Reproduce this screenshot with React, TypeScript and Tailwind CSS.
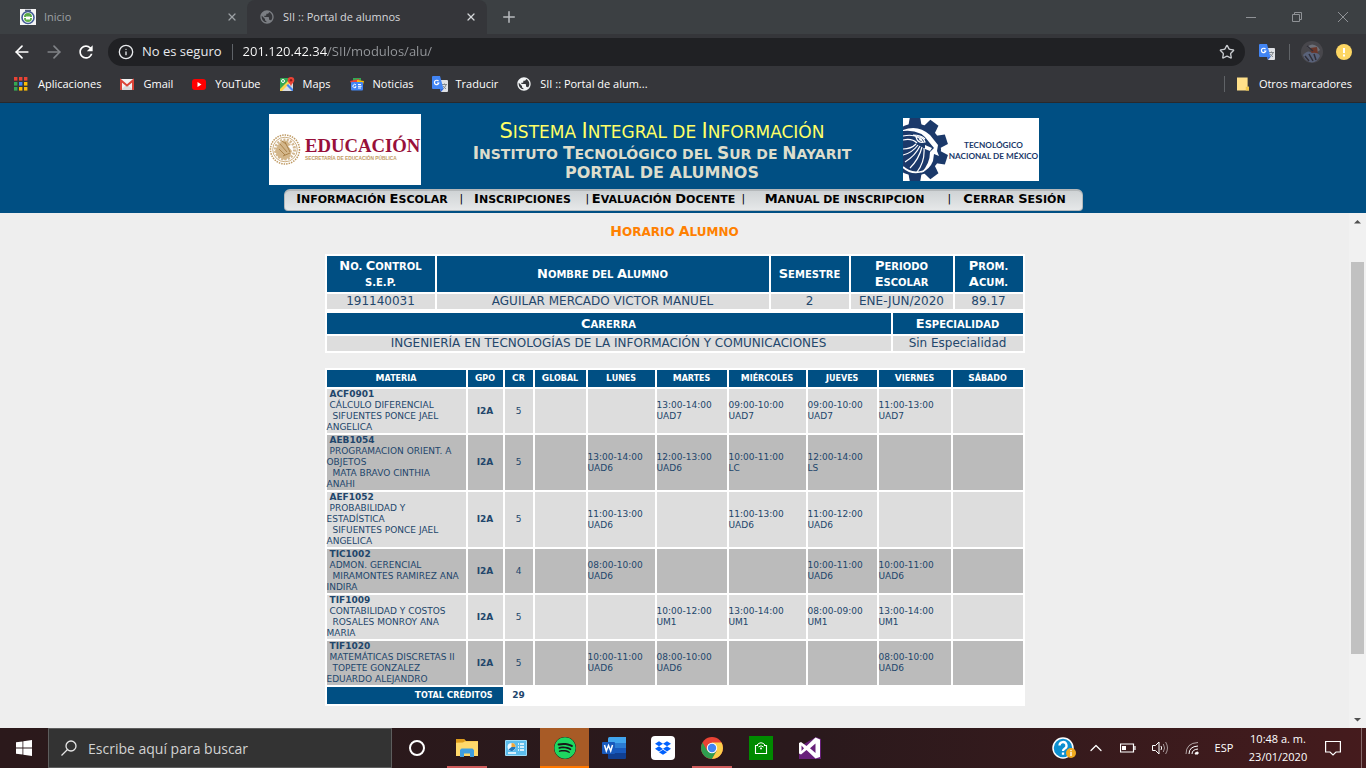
import type { ReactNode } from "react";
import { ArrowLeft, ArrowRight, ChevronUp, Info, Plus, Star, X } from "lucide-react";
import { MdPublic, MdRefresh } from "react-icons/md";
import { FaDropbox, FaSpotify } from "react-icons/fa";

/* ---------- Icons ---------- */

function TranslateIcon() {
  return (
    <svg viewBox="0 0 16 16" className="size-4 shrink-0" aria-hidden="true">
      <path d="M6 4h9a1 1 0 0 1 1 1v10a1 1 0 0 1-1 1H9z" fill="#dfe1e5" />
      <path d="M10 8.500h5M12.500 7.500v1M14 8.800c-.5 1.700-1.700 3.200-3 4M11.300 10c.6 1.200 1.500 2.200 2.700 2.800" stroke="#80868b" fill="none" />
      <path d="M1 0h7l3.500 13H1a1 1 0 0 1-1-1V1a1 1 0 0 1 1-1z" fill="#4285f4" />
      <path d="M9 16l2.500-3H8z" fill="#3367d6" />
      <path d="M6.500 5.200A2.200 2.200 0 1 0 6.800 7H5" stroke="#fff" strokeWidth="1.200" fill="none" />
    </svg>
  );
}

function CrestIcon() {
  return (
    <svg viewBox="0 0 16 16" className="size-4 shrink-0" aria-hidden="true">
      <rect width="16" height="16" fill="#f4f4f4" />
      <circle cx="8" cy="8.500" r="6" fill="#fff" stroke="#3f5a94" strokeWidth="1.600" />
      <path d="M4 8a4 4 0 0 1 8 0z" fill="#58a846" />
      <path d="M4 9h8a4 4 0 0 1-8 0z" fill="#5fae4c" />
      <path d="M6 7.500h4v3H6z" fill="#fff" />
      <path d="M5 1.500h6" stroke="#4d5b7c" strokeWidth="1.500" />
    </svg>
  );
}

function AppsIcon() {
  const colors = ["#ea4335", "#ea4335", "#ea4335", "#34a853", "#4285f4", "#fbbc05", "#34a853", "#fbbc05", "#fbbc05"];
  return (
    <svg viewBox="0 0 14 14" className="size-3.5 shrink-0" aria-hidden="true">
      {colors.map((c, i) => (
        <rect key={i} x={(i % 3) * 5} y={Math.floor(i / 3) * 5} width="3.400" height="3.600" fill={c} />
      ))}
    </svg>
  );
}

function GmailIcon() {
  return (
    <svg viewBox="0 0 16 16" className="size-4 shrink-0" aria-hidden="true">
      <rect x="1" y="3" width="14" height="11" rx="1" fill="#f2f2f2" />
      <path d="M2 14l6-6 6 6z" fill="#d9d9d9" />
      <path d="M2 14V4.500l6 5 6-5V14" fill="none" stroke="#db4437" strokeWidth="2" />
    </svg>
  );
}

function YouTubeIcon() {
  return (
    <svg viewBox="0 0 16 16" className="size-4 shrink-0" aria-hidden="true">
      <rect x="1" y="3" width="14" height="11" rx="3" fill="#f00" />
      <path d="M6.500 6v5l4-2.500z" fill="#fff" />
    </svg>
  );
}

function MapsIcon() {
  return (
    <svg viewBox="0 0 16 16" className="size-4 shrink-0" aria-hidden="true">
      <rect x="1" y="2" width="13" height="13" rx="1" fill="#34a853" />
      <path d="M2 15L13 4h1v10l-1 1z" fill="#dadce0" />
      <path d="M1 13L12 2h2v2L3 15H1z" fill="#fbd34d" />
      <path d="M7.500 9.500l5.500 5.500h1v-2L9 8z" fill="#4285f4" />
      <circle cx="4" cy="5" r="1.500" fill="none" stroke="#fff" />
      <path d="M12 1a3.300 3.300 0 0 1 3.300 3.300C15.300 6.800 12.600 7.600 12 10.500 11.400 7.600 8.700 6.800 8.700 4.300A3.300 3.300 0 0 1 12 1z" fill="#ea4335" />
      <circle cx="12" cy="4.300" r="1.200" fill="#8c1d18" />
    </svg>
  );
}

function NewsIcon() {
  return (
    <svg viewBox="0 0 16 16" className="size-4 shrink-0" aria-hidden="true">
      <path d="M4 2h8v5H4z" fill="#34a853" />
      <path d="M1 5l9-2 1 4H2z" fill="#ea4335" />
      <path d="M8 4l7 1-1 4H8z" fill="#fbbc05" />
      <rect x="2" y="6" width="12" height="8.500" rx="1" fill="#4285f4" />
      <path d="M7 9a1.700 1.700 0 1 0 .2 1.800H5.800M9 8.500h3M9 10.300h3.500M9 12h3" stroke="#fff" fill="none" />
    </svg>
  );
}

function FolderNoteIcon() {
  return (
    <svg viewBox="0 0 13 14" className="h-3.5 w-3 shrink-0" aria-hidden="true">
      <path d="M0 0h11.500v10H13v4H0z" fill="#ffe08a" />
      <path d="M9.500 10H13v4H9.500z" fill="#f2c94c" />
    </svg>
  );
}

/* ---------- Browser window ---------- */

function Tab({ icon, title, active }: { icon: ReactNode; title: string; active?: boolean }) {
  return (
    <div
      className={
        active
          ? "flex h-full w-[240px] items-center rounded-t-lg bg-[#35363a] pr-2 pl-3 text-[#d5d7da]"
          : "flex h-full w-[247px] items-center pr-[7px] pl-5 text-[#9da1a5]"
      }
    >
      {icon}
      <span className="ml-2 flex-1 text-[11px]">{title}</span>
      <button type="button" aria-label={`Cerrar ${title}`} className="flex size-4 items-center justify-center">
        <X className="size-3" strokeWidth={2.500} />
      </button>
    </div>
  );
}

function TabStrip() {
  return (
    <div className="flex h-[34px] items-center bg-[#3c4043]">
      <Tab icon={<CrestIcon />} title="Inicio" />
      <Tab active icon={<MdPublic className="size-4 text-[#7b7e83]" />} title="SII :: Portal de alumnos" />
      <button type="button" aria-label="Nueva pestaña" className="ml-[13px] text-[#b8bbbf]">
        <Plus className="size-[18px]" />
      </button>
      <div className="ml-auto flex h-7 text-[#8f9296]">
        <button type="button" aria-label="Minimizar" className="flex w-[46px] items-center justify-center">
          <svg viewBox="0 0 10 10" className="size-2.5"><path d="M0 5.500h10" stroke="currentColor" /></svg>
        </button>
        <button type="button" aria-label="Restaurar" className="flex w-[46px] items-center justify-center">
          <svg viewBox="0 0 10 10" className="size-2.5" fill="none" stroke="currentColor">
            <path d="M.5 2.500h7v7h-7zM2.500 2.500v-2h7v7h-2" />
          </svg>
        </button>
        <button type="button" aria-label="Cerrar" className="flex w-[46px] items-center justify-center">
          <svg viewBox="0 0 10 10" className="size-2.5"><path d="M0 0l10 10M10 0L0 10" stroke="currentColor" /></svg>
        </button>
      </div>
    </div>
  );
}

function Toolbar() {
  return (
    <div className="flex h-9 items-center pl-3 pr-3.5">
      <div className="flex w-24 items-center gap-3">
        <button type="button" aria-label="Atrás" className="text-white"><ArrowLeft className="size-5" /></button>
        <button type="button" aria-label="Adelante" className="text-[#808387]"><ArrowRight className="size-5" /></button>
        <button type="button" aria-label="Recargar" className="text-white"><MdRefresh className="size-5" /></button>
      </div>
      <div className="flex h-7 flex-1 items-center rounded-full bg-[#202124] pr-2.5 pl-2.5 text-[13px]">
        <Info className="size-4 text-[#e8eaed]" />
        <span className="ml-2 text-[#e8eaed]">No es seguro</span>
        <span className="mx-2.5 h-4 w-px bg-[#5f6368]" />
        <input
          type="text"
          aria-label="Dirección"
          defaultValue="201.120.42.34/SII/modulos/alu/"
          className="min-w-0 flex-1 bg-[linear-gradient(90deg,#ffffff_85px,#96999d_85px)] bg-clip-text text-transparent outline-none"
        />
        <button type="button" aria-label="Añadir a marcadores" className="text-[#c9ccd0]"><Star className="size-4" /></button>
      </div>
      <button type="button" aria-label="Traducir" className="ml-3.5"><TranslateIcon /></button>
      <span className="ml-3.5 h-4 w-px bg-[#606367]" />
      <button type="button" aria-label="Perfil" className="ml-[11px]">
        <svg viewBox="0 0 22 22" className="size-[22px]">
          <circle cx="11" cy="11" r="11" fill="#48474c" />
          <path d="M6 6q5-5 11 0l2 3-4 3-5-3z" fill="#6d7079" />
          <path d="M9 7l7-1 1 7-6 2z" fill="#6b3629" />
          <path d="M2 14q5-6 9-2 6-1 8 3-3 6-8 6.500Q4 21 2 14z" fill="#59627a" />
          <path d="M4 15l4 5M8 13l4 7M13 13l2 6M6 5l6 5" stroke="#302f38" strokeWidth="1.500" />
        </svg>
      </button>
      <button type="button" aria-label="Actualización disponible" className="ml-[13px]">
        <svg viewBox="0 0 16 16" className="size-4">
          <circle cx="8" cy="8" r="8" fill="#fdd663" />
          <path d="M8 4v5M8 10.500v2" stroke="#fff" strokeWidth="2" />
        </svg>
      </button>
    </div>
  );
}

const bookmarks: { label: string; icon: ReactNode }[] = [
  { label: "Gmail", icon: <GmailIcon /> },
  { label: "YouTube", icon: <YouTubeIcon /> },
  { label: "Maps", icon: <MapsIcon /> },
  { label: "Noticias", icon: <NewsIcon /> },
  { label: "Traducir", icon: <TranslateIcon /> },
  { label: "SII :: Portal de alum...", icon: <MdPublic className="size-4 text-[#f1f3f4]" /> },
];

function BookmarkBar() {
  return (
    <nav aria-label="Marcadores" className="flex h-[33px] items-center gap-[18px] border-b border-[#29292c] pr-3.5 pb-1 pl-3.5 text-[11px] text-white">
      <a href="#aplicaciones" className="flex items-center gap-2.5"><AppsIcon />Aplicaciones</a>
      {bookmarks.map((b) => (
        <a key={b.label} href="#marcador" className="flex items-center gap-2">{b.icon}{b.label}</a>
      ))}
      <a href="#otros" className="ml-auto flex items-center gap-2.5 border-l border-[#606367] pl-3">
        <FolderNoteIcon />Otros marcadores
      </a>
    </nav>
  );
}

/* ---------- Portal header ---------- */

/** Capitals keep the surrounding size; the remaining letters are set as smaller capitals. */
function SmallCaps({ children, small }: { children: string; small: string }) {
  const runs = children.match(/\p{Lu}+|\P{Lu}+/gu) ?? [];
  return (
    <>
      {runs.map((run, i) =>
        /^\p{Lu}/u.test(run) ? run : <span key={i} className={`uppercase ${small}`}>{run}</span>
      )}
    </>
  );
}

function EducacionLogo() {
  return (
    <svg viewBox="0 0 152 71" className="h-[71px] w-[152px]" role="img" aria-label="Educación">
      <rect width="152" height="71" fill="#fff" />
      <g fill="none" stroke="#bf9a63">
        <circle cx="16" cy="35.500" r="14.500" strokeWidth="1.500" strokeDasharray="1.500 1" />
        <circle cx="16" cy="35.500" r="12.300" strokeWidth=".8" />
        <circle cx="16" cy="35.500" r="9.500" strokeWidth="3" strokeDasharray="2 1.300" opacity=".7" />
      </g>
      <path d="M9 31q4-6 9-4l4 4-3 1 4 5-2 6-5 3-7-3-3-6z" fill="#d3b68a" />
      <path d="M11 30l7 8M10 35l6 6M16 28l5 10M14 42l7-3M13 27l4 3" stroke="#a57c42" strokeWidth=".9" />
      <text x="36" y="38" fontFamily="'Liberation Serif', serif" fontWeight="700" fontSize="18.700" fill="#98103a">EDUCACIÓN</text>
      <text x="36" y="46" fontFamily="'Liberation Sans', sans-serif" fontWeight="700" fontSize="4.800" fill="#bf9a63">SECRETARÍA DE EDUCACIÓN PÚBLICA</text>
    </svg>
  );
}

function TecnmLogo() {
  const teeth = [0, 36, 72, 108, 144, 180];
  return (
    <svg viewBox="0 0 136 63" className="h-[63px] w-[136px]" role="img" aria-label="Tecnológico Nacional de México">
      <rect width="136" height="63" fill="#fff" />
      <g fill="#1b396a">
        <circle cx="12" cy="31.500" r="26" />
        {teeth.map((a) => (
          <path key={a} d="M5.500 7l1.500-8.500h10l1.500 8.500z" transform={`rotate(${a} 12 31.500)`} />
        ))}
      </g>
      <path d="M0 12Q15 6 27 17l8 10-1 6 2 5-5-2-1 7q-3 8-12 12 9-9 9-21l4-4-5-6Q18 11 0 13z" fill="#fff" />
      <g fill="none" stroke="#fff" strokeWidth="1.200">
        <path d="M0 18q14-3 20 6M0 22q9-2 14 3M10 17q8 0 12 4" />
        <path d="M13 19q7-1 9 5-7 2-9-5z" />
        <path d="M0 31q8 0 13-5M0 37q9-2 15-10M2 44Q12 38 17 28M7 50q9-9 12-21M14 54q8-10 7-24" />
        <path d="M0 49q8 8 21 4" strokeWidth="1.800" />
      </g>
      <path d="M22 27l7 3-2 3-5-2z" fill="#fff" />
      <circle cx="17.500" cy="21.500" r="1.300" fill="#fff" />
      <g fontFamily="Lato, sans-serif" fontWeight="700" fontSize="8.200" fill="#1b396a" textAnchor="middle">
        <text x="90.500" y="30">TECNOLÓGICO</text>
        <text x="90.500" y="40.500">NACIONAL DE MÉXICO</text>
      </g>
    </svg>
  );
}

const menu = [
  { label: "Información Escolar", width: "w-[175px]" },
  { label: "Inscripciones", width: "w-[126px]" },
  { label: "Evaluación Docente", width: "w-[156px]" },
  { label: "Manual de inscripcion", width: "w-[206px]" },
  { label: "Cerrar Sesión", width: "w-[134px]" },
];

function PortalHeader() {
  return (
    <header className="flex h-[110px] shrink-0 flex-col items-center bg-[#004f83] pt-[11px]">
      <div className="grid w-full max-w-[828px] grid-cols-[152px_1fr_136px] pr-[58px]">
        <EducacionLogo />
        <div className="pt-1.5 text-center font-bold whitespace-nowrap text-[#ddddcc]">
          <h1 className="text-[21px] leading-[22px] font-normal text-[#ffff66]"><SmallCaps small="text-[17px]">Sistema Integral de Información</SmallCaps></h1>
          <p className="text-[17px] leading-5"><SmallCaps small="text-[14px]">Instituto Tecnológico del Sur de Nayarit</SmallCaps></p>
          <p className="text-[16px] leading-[18px]">PORTAL DE ALUMNOS</p>
        </div>
        <div className="pt-1"><TecnmLogo /></div>
      </div>
      <nav aria-label="Portal" className="mt-1 flex h-[22px] rounded-t-md rounded-b-sm border border-t-2 border-[#b4b8ba] bg-linear-to-b from-[#cfd3d5] to-[#e6e8e9] text-[13px] leading-4 font-bold text-black">
        {menu.map((m, i) => (
          <span key={m.label} className={`flex ${m.width}`}>
            <a href="#portal" className="flex-1 text-center whitespace-nowrap"><SmallCaps small="text-[11px]">{m.label}</SmallCaps></a>
            {i < menu.length - 1 && <span className="w-0 text-[11px] font-normal">|</span>}
          </span>
        ))}
      </nav>
    </header>
  );
}

/* ---------- Student data ---------- */

function Th({ lines, small }: { lines: string[]; small: string }) {
  return (
    <th className="bg-[#004f83] p-0 whitespace-nowrap text-white">
      {lines.map((l) => <div key={l}><SmallCaps small={small}>{l}</SmallCaps></div>)}
    </th>
  );
}

function Td({ children }: { children: ReactNode }) {
  return <td className="bg-[#dddddd] p-0 text-center">{children}</td>;
}

function StudentTables() {
  return (
    <>
      <table className="w-[700px] table-fixed border-separate border-spacing-[2px] bg-white text-[12px] leading-[15px]">
        <colgroup>
          <col className="w-[108px]" /><col /><col className="w-[78px]" /><col className="w-[102px]" /><col className="w-[68px]" />
        </colgroup>
        <thead>
          <tr className="h-9 text-[13px]">
            <Th small="text-[10px]" lines={["No. Control", "s.e.p."]} />
            <Th small="text-[10px]" lines={["Nombre del Alumno"]} />
            <Th small="text-[10px]" lines={["Semestre"]} />
            <Th small="text-[10px]" lines={["Periodo", "Escolar"]} />
            <Th small="text-[10px]" lines={["Prom.", "Acum."]} />
          </tr>
        </thead>
        <tbody>
          <tr>
            <Td>191140031</Td>
            <Td>AGUILAR MERCADO VICTOR MANUEL</Td>
            <Td>2</Td>
            <Td>ENE-JUN/2020</Td>
            <Td>89.17</Td>
          </tr>
        </tbody>
      </table>
      <table className="w-[700px] table-fixed border-separate border-spacing-[2px] bg-white text-[12px] leading-[15px]">
        <colgroup><col /><col className="w-[130px]" /></colgroup>
        <thead>
          <tr className="h-[21px] text-[13px]">
            <Th small="text-[10px]" lines={["Carerra"]} />
            <Th small="text-[10px]" lines={["Especialidad"]} />
          </tr>
        </thead>
        <tbody>
          <tr>
            <Td>INGENIERÍA EN TECNOLOGÍAS DE LA INFORMACIÓN Y COMUNICACIONES</Td>
            <Td>Sin Especialidad</Td>
          </tr>
        </tbody>
      </table>
    </>
  );
}

type Course = { code: string; name: string[]; teacher: string[]; credits: number; days: string[] };

const courses: Course[] = [
  { code: "ACF0901", name: ["CÁLCULO DIFERENCIAL"], teacher: ["SIFUENTES PONCE JAEL", "ANGELICA"], credits: 5, days: ["", "13:00-14:00 UAD7", "09:00-10:00 UAD7", "09:00-10:00 UAD7", "11:00-13:00 UAD7", ""] },
  { code: "AEB1054", name: ["PROGRAMACION ORIENT. A", "OBJETOS"], teacher: ["MATA BRAVO CINTHIA", "ANAHI"], credits: 5, days: ["13:00-14:00 UAD6", "12:00-13:00 UAD6", "10:00-11:00 LC", "12:00-14:00 LS", "", ""] },
  { code: "AEF1052", name: ["PROBABILIDAD Y", "ESTADÍSTICA"], teacher: ["SIFUENTES PONCE JAEL", "ANGELICA"], credits: 5, days: ["11:00-13:00 UAD6", "", "11:00-13:00 UAD6", "11:00-12:00 UAD6", "", ""] },
  { code: "TIC1002", name: ["ADMON. GERENCIAL"], teacher: ["MIRAMONTES RAMIREZ ANA", "INDIRA"], credits: 4, days: ["08:00-10:00 UAD6", "", "", "10:00-11:00 UAD6", "10:00-11:00 UAD6", ""] },
  { code: "TIF1009", name: ["CONTABILIDAD Y COSTOS"], teacher: ["ROSALES MONROY ANA", "MARIA"], credits: 5, days: ["", "10:00-12:00 UM1", "13:00-14:00 UM1", "08:00-09:00 UM1", "13:00-14:00 UM1", ""] },
  { code: "TIF1020", name: ["MATEMÁTICAS DISCRETAS II"], teacher: ["TOPETE GONZALEZ", "EDUARDO ALEJANDRO"], credits: 5, days: ["10:00-11:00 UAD6", "08:00-10:00 UAD6", "", "", "08:00-10:00 UAD6", ""] },
];

const headings = ["Materia", "Gpo", "Cr", "Global", "Lunes", "Martes", "Miércoles", "Jueves", "Viernes", "Sábado"];

function ScheduleTable() {
  return (
    <table className="mt-[15px] w-[700px] table-fixed border-separate border-spacing-[2px] bg-white text-[9px] leading-[11px]">
      <colgroup>
        <col className="w-[139px]" /><col className="w-[35px]" /><col className="w-[28px]" /><col className="w-[51px]" /><col className="w-[67px]" />
        <col className="w-[70px]" /><col className="w-[77px]" /><col className="w-[69px]" /><col className="w-[72px]" /><col className="w-[70px]" />
      </colgroup>
      <thead>
        <tr className="h-[17px]">{headings.map((h) => <Th key={h} small="text-[8px]" lines={[h]} />)}</tr>
      </thead>
      <tbody>
        {courses.map((c) => (
          <tr key={c.code} className="bg-[#dddddd] even:bg-[#bbbbbb]">
            <td className="bg-inherit p-0 whitespace-nowrap">
              <b className="pl-[3px]">{c.code}</b>
              {c.name.map((n, i) => <div key={n} className={i === 0 ? "pl-[3px]" : ""}>{n}</div>)}
              {c.teacher.map((t, i) => <div key={t} className={i === 0 ? "pl-1.5" : ""}>{t}</div>)}
            </td>
            <td className="bg-inherit p-0 text-center font-bold">I2A</td>
            <td className="bg-inherit p-0 text-center">{c.credits}</td>
            <td className="bg-inherit p-0" />
            {c.days.map((d, i) => {
              const [time, room] = d.split(" ");
              return <td key={i} className="bg-inherit p-0">{time}{room && <><br />{room}</>}</td>;
            })}
          </tr>
        ))}
      </tbody>
      <tfoot>
        <tr className="h-[17px] font-bold">
          <th colSpan={2} className="bg-[#004f83] p-0 pr-2.5 text-right text-white"><SmallCaps small="text-[8px]">Total Créditos</SmallCaps></th>
          <td className="p-0 text-center">29</td>
          <td colSpan={7} />
        </tr>
      </tfoot>
    </table>
  );
}

function ScrollBar() {
  return (
    <div className="flex w-[17px] flex-col items-center bg-[#f1f1f1] text-[#505050]">
      <svg viewBox="0 0 17 17" className="size-[17px] shrink-0"><path d="M5 10.500h7L8.500 7z" fill="#505050" /></svg>
      <div className="grow-32" />
      <div className="w-[13px] grow-392 bg-[#c1c1c1]" />
      <div className="grow-57" />
      <svg viewBox="0 0 17 17" className="size-[17px] shrink-0"><path d="M5 7h7l-3.500 3.500z" fill="#505050" /></svg>
    </div>
  );
}

/* ---------- Taskbar ---------- */

function ExplorerIcon() {
  return (
    <svg viewBox="0 0 22 18" className="h-[18px] w-[22px]">
      <path d="M0 0h8l2 2h12v15H0z" fill="#f4bd3c" />
      <path d="M0 4l10-1.500h12V17H0z" fill="#ffd96b" />
      <path d="M0 0h8l1 2-2 1.500H0z" fill="#dd9b1c" />
      <path d="M4 18v-7l1.500-1.500h11L18 11v7h-4v-3.500H8V18z" fill="#3f9fe0" />
    </svg>
  );
}

function ControlPanelIcon() {
  return (
    <svg viewBox="0 0 22 16" className="h-4 w-[22px]">
      <rect width="22" height="16" rx="1" fill="#9bdcf7" />
      <rect x="1" y="1" width="20" height="14" fill="#5bbcec" />
      <circle cx="6.500" cy="7" r="4" fill="#e9f7fe" />
      <path d="M6.500 7V3a4 4 0 0 1 4 4z" fill="#f0a63a" />
      <path d="M6.500 7h4a4 4 0 0 1-7 2.600z" fill="#2277bb" />
      <path d="M13 4h1M15 4h4M13 7h1M15 7h4M13 10h1M15 10h4M3 13h8" stroke="#fff" strokeWidth="1.400" />
    </svg>
  );
}

function WordIcon() {
  return (
    <svg viewBox="0 0 24 22" className="h-[22px] w-6">
      <path d="M6 1.500A1.500 1.500 0 0 1 7.500 0H24v6H6z" fill="#41a5ee" />
      <path d="M6 6h18v5H6z" fill="#2b7cd3" />
      <path d="M6 11h18v5H6z" fill="#185abd" />
      <path d="M6 16h18v5a1 1 0 0 1-1 1H7a1 1 0 0 1-1-1z" fill="#103f91" />
      <rect y="5" width="13" height="12" rx="1" fill="#185abd" />
      <path d="M2.500 8l1.800 6 2.200-5.500L8.700 14l1.800-6" fill="none" stroke="#fff" strokeWidth="1.500" />
    </svg>
  );
}

function ChromeIcon() {
  return (
    <svg viewBox="0 0 22 22" className="size-[22px]">
      <circle cx="11" cy="11" r="11" fill="#ea4335" />
      <path d="M1.500 5.500A11 11 0 0 0 11 22l4.800-8.300H6.300z" fill="#2f9e4f" />
      <path d="M20.500 5.500H11v5l4.800 3.200L11 22A11 11 0 0 0 20.500 5.500z" fill="#fbcf4b" />
      <circle cx="11" cy="11" r="5.200" fill="#fff" />
      <circle cx="11" cy="11" r="4.200" fill="#4285f4" />
    </svg>
  );
}

function StoreIcon() {
  return (
    <svg viewBox="0 0 24 24" className="size-6">
      <rect width="24" height="24" fill="#008a00" />
      <path d="M9 9.500H6.500v8h11v-8H15" fill="none" stroke="#fff" strokeWidth="1.100" />
      <path d="M8 9q4-4.500 8 0M9.500 11q2.500-2.500 5 0" fill="none" stroke="#fff" />
      <circle cx="12" cy="12.500" r="1" fill="#fff" />
    </svg>
  );
}

function VisualStudioIcon() {
  return (
    <svg viewBox="0 0 22 22" className="size-[22px]">
      <path d="M0 7h5L17 0l5 2v20H0z" fill="#68217a" />
      <path fillRule="evenodd" d="M0 6l2-1 5.500 4L16.500.500 21 2.500v17.500l-4.500 1.500-9-8.500L2 17.500 0 16.500zM2.500 8.500v5.500l2.500-2.700zM16.500 6.500l-5.500 4.800 5.500 4.700z" fill="#fff" />
    </svg>
  );
}

type AppEntry = { name: string; icon: ReactNode; state?: "open" | "active" };

const apps: AppEntry[] = [
  { name: "Explorador de archivos", icon: <ExplorerIcon />, state: "open" },
  { name: "Panel de control", icon: <ControlPanelIcon /> },
  { name: "Spotify", icon: <FaSpotify className="size-[22px] rounded-full bg-[#17191a] text-[#1ed760]" />, state: "active" },
  { name: "Word", icon: <WordIcon /> },
  { name: "Dropbox", icon: <span className="flex size-6 items-center justify-center rounded-sm bg-white"><FaDropbox className="size-4 text-[#0061fe]" /></span> },
  { name: "Chrome", icon: <ChromeIcon />, state: "open" },
  { name: "Tienda", icon: <StoreIcon /> },
  { name: "Visual Studio", icon: <VisualStudioIcon /> },
];

function Taskbar() {
  return (
    <footer className="flex h-10 shrink-0 items-center bg-linear-to-r from-[#2b191b] via-[#2a191c] via-60% to-[#451b1d] text-white">
      <button type="button" aria-label="Inicio" className="flex w-12 items-center justify-center">
        <svg viewBox="0 0 16 16" className="size-4" fill="#fff">
          <path d="M0 2.300L6.500 1.400v6.200H0zM7.300 1.300L16 0v7.600H7.300zM0 8.400h6.500v6.200L0 13.700zM7.300 8.400H16V16l-8.700-1.300z" />
        </svg>
      </button>
      <label className="flex h-full w-[344px] items-center border border-[#5d5d5d] bg-[#333333] pl-3">
        <svg viewBox="0 0 16 16" className="size-4" fill="none" stroke="#e6e6e6" strokeWidth="1.300">
          <circle cx="10" cy="6" r="5" /><path d="M6.500 9.500L.5 15.500" />
        </svg>
        <input type="text" aria-label="Buscar" placeholder="Escribe aquí para buscar" className="ml-[11px] min-w-0 flex-1 text-[14px] outline-none placeholder:text-[#d2d2d2]" />
      </label>
      <button type="button" aria-label="Cortana" className="flex w-[50px] items-center justify-center">
        <span className="size-4 rounded-full border-2 border-white" />
      </button>
      {apps.map((a) => (
        <button
          key={a.name}
          type="button"
          aria-label={a.name}
          className={
            a.state === "active"
              ? "flex h-full w-[49px] flex-col items-center bg-[#a85b26]"
              : "flex h-full w-[49px] flex-col items-center"
          }
        >
          <span className="flex flex-1 items-center pt-0.5">{a.icon}</span>
          <span className={a.state === "active" ? "h-0.5 w-full bg-[#ff7800]" : a.state === "open" ? "h-0.5 w-10 bg-[#cf5c5c]" : "h-0.5"} />
        </button>
      ))}
      <div className="ml-auto flex h-full items-center text-[11px]">
        <button type="button" aria-label="Ayuda" className="flex w-8 justify-center">
          <svg viewBox="0 0 24 22" className="h-[22px] w-6">
            <circle cx="11" cy="11" r="10" fill="#0c8fd0" stroke="#fff" strokeWidth="1.500" />
            <path d="M7.500 8.500a3.500 3.500 0 1 1 5 3.200q-1.500.8-1.500 2.300M11 15.500v2.300" stroke="#fff" strokeWidth="2.300" fill="none" />
            <circle cx="19" cy="16" r="5" fill="#f0a91f" />
            <path d="M19 13v1.200M19 15v4" stroke="#fff" strokeWidth="1.300" />
          </svg>
        </button>
        <button type="button" aria-label="Mostrar iconos ocultos" className="flex w-8 justify-center">
          <ChevronUp className="size-5" strokeWidth={1.500} />
        </button>
        <button type="button" aria-label="Batería" className="flex w-8 justify-center">
          <svg viewBox="0 0 16 10" className="h-2.5 w-4"><path d="M.5 1h13v8H.5zM15 3v4" fill="none" stroke="#fff" strokeWidth="1.200" /><path d="M2 3h4v4H2z" fill="#fff" /></svg>
        </button>
        <button type="button" aria-label="Volumen" className="flex w-8 justify-center">
          <svg viewBox="0 0 17 14" className="h-3.5 w-[17px]" fill="none" stroke="#fff">
            <path d="M.5 4.500h3L7 1v12L3.500 9.500h-3zM9 5q1.300 2 0 4" />
            <path d="M11.300 3q2.500 4 0 8M13.600 1q3.800 6 0 12" opacity=".55" />
          </svg>
        </button>
        <button type="button" aria-label="Red" className="flex w-8 justify-center">
          <svg viewBox="0 0 14 14" className="size-3.5" fill="none" stroke="#fff">
            <path d="M1 13Q1 2 13 1.500" opacity=".6" /><path d="M4 13q0-7.500 9-8M7 13q0-4.500 6-5" />
            <path d="M10 13q0-2 3-2v2z" fill="#fff" />
          </svg>
        </button>
        <button type="button" className="w-8 text-center">ESP</button>
        <div className="w-[76px] text-center leading-[18px]">10:48 a. m.<br />23/01/2020</div>
        <button type="button" aria-label="Notificaciones" className="flex w-[34px] justify-center">
          <svg viewBox="0 0 16 16" className="size-4" fill="none" stroke="#fff" strokeWidth="1.200"><path d="M.6 1.500h14.800v10.500h-4.400L8 15l-3-3H.6z" /></svg>
        </button>
        <span className="ml-[11px] h-full w-[5px] border-l border-[#85696a]" />
      </div>
    </footer>
  );
}

export default function App() {
  return (
    <div className="flex min-h-screen flex-col bg-[#35363a] font-['Segoe_UI','Open_Sans',sans-serif]">
      <TabStrip />
      <Toolbar />
      <BookmarkBar />
      <div className="flex flex-1 flex-col font-[Verdana,'DejaVu_Sans',sans-serif]">
        <PortalHeader />
        <div className="flex flex-1 bg-[#eeeeee]">
          <main className="flex flex-1 flex-col items-center pt-2.5 text-[#22466b]">
            <h2 className="mb-3.5 text-[14px] leading-4 font-bold text-[#ff8000]"><SmallCaps small="text-[12px]">Horario Alumno</SmallCaps></h2>
            <StudentTables />
            <ScheduleTable />
          </main>
          <ScrollBar />
        </div>
      </div>
      <Taskbar />
    </div>
  );
}
